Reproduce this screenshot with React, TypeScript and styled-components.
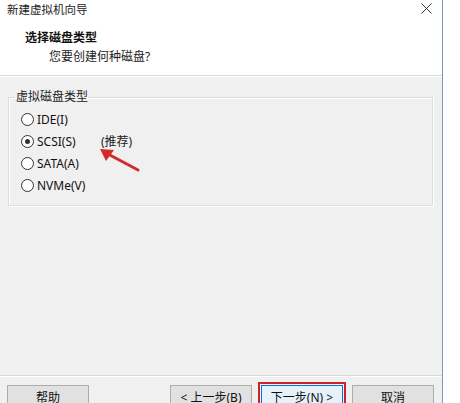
import React from 'react';
import styled, { createGlobalStyle } from 'styled-components';

const GlobalStyle = createGlobalStyle`
  html, body {
    margin: 0;
    padding: 0;
    background: #ffffff;
    overflow: hidden;
  }
  body {
    font-family: "Noto Sans", "Noto Sans CJK SC", sans-serif;
    font-size: 12px;
    color: #1a1a1a;
  }
`;

const Window = styled.div`
  position: relative;
  width: 442px;
  height: 403px;
  overflow: hidden;
  display: flex;
  flex-direction: column;
  border-right: 1px solid #7d97bb;
  background: #f0f0f0;
`;

const TitleBar = styled.div`
  height: 18px;
  display: flex;
  align-items: center;
  justify-content: space-between;
  padding: 0 10px 0 7px;
  background: #ffffff;
  font-size: 11.5px;
  color: #222;
`;

const CloseButton = styled.svg`
  width: 11px;
  height: 11px;
  margin-top: -2px;
`;

const Header = styled.div`
  height: 58px;
  box-sizing: border-box;
  padding: 12px 0 0 25px;
  background: #ffffff;
  border-bottom: 1px solid #d9d9d9;
`;

const Heading = styled.div`
  font-weight: bold;
  font-size: 12px;
  line-height: 16px;
  color: #111;
`;

const SubHeading = styled.div`
  margin: 3px 0 0 24px;
  font-size: 12px;
  line-height: 16px;
  color: #222;
`;

const Body = styled.div`
  flex: 1;
  border-top: 1px solid #ffffff;
  padding: 12px 9px 0 8px;
`;

const GroupBox = styled.fieldset`
  margin: 0;
  padding: 0 0 9px 6px;
  border: 1px solid #dcdcdc;
  box-shadow: inset 1px 1px 0 #ffffff, 1px 1px 0 #ffffff;
`;

const Legend = styled.legend`
  padding: 0 1px;
  font-size: 12px;
  line-height: 16px;
  color: #222;
`;

const OptionList = styled.div`
  margin-top: 3px;
  display: flex;
  flex-direction: column;
`;

const OptionRow = styled.label`
  height: 22px;
  display: flex;
  align-items: center;
  padding-left: 6px;
  font-size: 12px;
  color: #111;
`;

const RadioCircle = styled.span<{ $checked?: boolean }>`
  width: 11px;
  height: 11px;
  border-radius: 50%;
  border: 1px solid #333;
  background: #ffffff;
  display: flex;
  align-items: center;
  justify-content: center;
  flex-shrink: 0;

  &::after {
    content: '';
    width: 5px;
    height: 5px;
    border-radius: 50%;
    background: ${(p) => (p.$checked ? '#333' : 'transparent')};
  }
`;

const OptionText = styled.span`
  margin-left: 3px;
  min-width: 64px;
`;

const Recommend = styled.span`
  color: #222;
`;

const Footer = styled.div`
  height: 18px;
  flex-shrink: 0;
  display: flex;
  gap: 9px;
  padding: 9px 8px 0 7px;
  border-top: 1px solid #d9d9d9;
  box-shadow: inset 0 1px 0 #ffffff;
`;

const Spacer = styled.div`
  flex: 1;
`;

const Button = styled.button<{ $primary?: boolean }>`
  width: 82px;
  height: 23px;
  flex-shrink: 0;
  padding: 0;
  font-family: "Noto Sans", "Noto Sans CJK SC", sans-serif;
  font-size: 12px;
  color: #111;
  background: ${(p) => (p.$primary ? '#e5f1fb' : '#e1e1e1')};
  border: 1px solid ${(p) => (p.$primary ? '#0078d7' : '#adadad')};
  outline: ${(p) => (p.$primary ? '2px solid #d0202a' : 'none')};
  outline-offset: 1px;
`;

const Arrow = styled.svg`
  position: absolute;
  left: 92px;
  top: 142px;
  width: 52px;
  height: 34px;
  pointer-events: none;
`;

const options = [
  { label: 'IDE(I)' },
  { label: 'SCSI(S)', checked: true, note: true },
  { label: 'SATA(A)' },
  { label: 'NVMe(V)' },
];

export default function App() {
  return (
    <>
      <GlobalStyle />
      <Window>
        <TitleBar>
          <span>新建虚拟机向导</span>
          <CloseButton viewBox="0 0 11 11">
            <path d="M0.5 0.5 L10.5 10.5 M10.5 0.5 L0.5 10.5" stroke="#333" strokeWidth="1" />
          </CloseButton>
        </TitleBar>
        <Header>
          <Heading>选择磁盘类型</Heading>
          <SubHeading>您要创建何种磁盘?</SubHeading>
        </Header>
        <Body>
          <GroupBox>
            <Legend>虚拟磁盘类型</Legend>
            <OptionList>
              {options.map((o) => (
                <OptionRow key={o.label}>
                  <RadioCircle $checked={o.checked} />
                  <OptionText>{o.label}</OptionText>
                  {o.note && <Recommend>(推荐)</Recommend>}
                </OptionRow>
              ))}
            </OptionList>
          </GroupBox>
        </Body>
        <Footer>
          <Button>帮助</Button>
          <Spacer />
          <Button>&lt; 上一步(B)</Button>
          <Button $primary>下一步(N) &gt;</Button>
          <Button>取消</Button>
        </Footer>
        <Arrow viewBox="0 0 52 34">
          <path d="M46 28 L16 12" stroke="#d42a2a" strokeWidth="3" strokeLinecap="round" />
          <path d="M8 7 L22 8 L14 19 Z" fill="#d42a2a" />
        </Arrow>
      </Window>
    </>
  );
}
